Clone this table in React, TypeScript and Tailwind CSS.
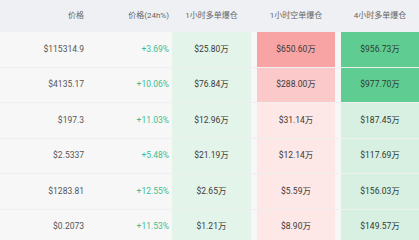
const rows = [
  { price: '$115314.9', change: '+3.69%', long1h: '$25.80万', short1h: '$650.60万', long4h: '$956.73万', shortBg: 'bg-[#f9a4a4]', longBg: 'bg-[#5fcd91]' },
  { price: '$4135.17', change: '+10.06%', long1h: '$76.84万', short1h: '$288.00万', long4h: '$977.70万', shortBg: 'bg-[#fbc9c9]', longBg: 'bg-[#5fcd91]' },
  { price: '$197.3', change: '+11.03%', long1h: '$12.96万', short1h: '$31.14万', long4h: '$187.45万', shortBg: 'bg-[#fde7e7]', longBg: 'bg-[#d7f0e1]' },
  { price: '$2.5337', change: '+5.48%', long1h: '$21.19万', short1h: '$12.14万', long4h: '$117.69万', shortBg: 'bg-[#fde7e7]', longBg: 'bg-[#d7f0e1]' },
  { price: '$1283.81', change: '+12.55%', long1h: '$2.65万', short1h: '$5.59万', long4h: '$156.03万', shortBg: 'bg-[#fde7e7]', longBg: 'bg-[#d7f0e1]' },
  { price: '$0.2073', change: '+11.53%', long1h: '$1.21万', short1h: '$8.90万', long4h: '$149.57万', shortBg: 'bg-[#fde7e7]', longBg: 'bg-[#d7f0e1]' },
];

export default function App() {
  return (
    <div
      className="h-[240px] w-[419px] overflow-hidden bg-[#f7f7f7] text-[8.5px] text-[#555]"
      style={{ fontFamily: 'Roboto, "Noto Sans CJK SC", sans-serif' }}
    >
      {/* Header */}
      <div className="flex h-[32px] items-center bg-[#eef0f3] text-[8px] text-[#666]">
        <div className="w-[88px] pr-[4px] text-right">价格</div>
        <div className="w-[84px] pr-[3px] text-right">价格(24h%)</div>
        <div className="w-[79px] text-center">1小时多单爆仓</div>
        <div className="ml-[6px] w-[78px] text-center">1小时空单爆仓</div>
        <div className="ml-[6px] w-[78px] text-center">4小时多单爆仓</div>
      </div>

      {rows.map((r) => (
        <div key={r.price} className="flex h-[35.5px] items-stretch border-b border-[#efefef]">
          <div className="flex w-[88px] items-center justify-end pr-[4px]">{r.price}</div>
          <div className="flex w-[84px] items-center justify-end pr-[3px] text-[#3dbd8f]">{r.change}</div>
          <div className="flex w-[79px] items-center justify-center bg-[#e3f4ea] text-[#3a3a3a]">
            {r.long1h}
          </div>
          <div className={`ml-[6px] flex w-[78px] items-center justify-center text-[#3a3a3a] ${r.shortBg}`}>
            {r.short1h}
          </div>
          <div className={`ml-[6px] flex w-[78px] items-center justify-center text-[#2f3a33] ${r.longBg}`}>
            {r.long4h}
          </div>
        </div>
      ))}
    </div>
  );
}
